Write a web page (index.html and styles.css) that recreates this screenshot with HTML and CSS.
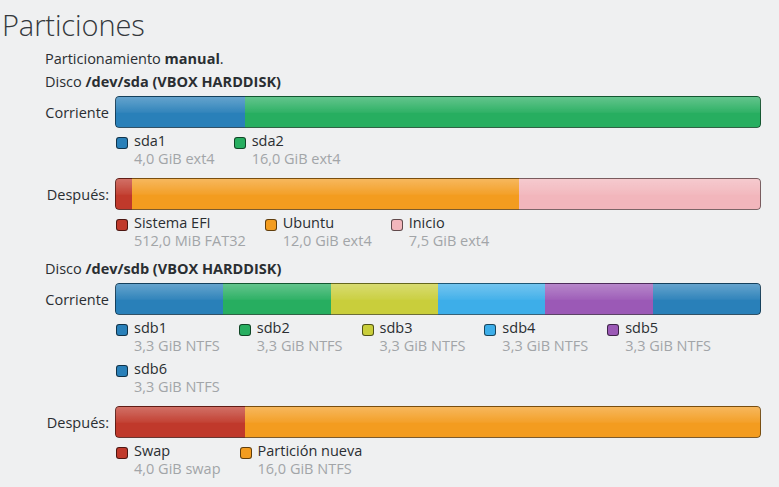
FILE: index.html
```html
<!DOCTYPE html>
<html lang="es">
<head>
<meta charset="utf-8">
<title>Particiones</title>
<link rel="stylesheet" href="styles.css">
</head>
<body>
<h1 class="title">Particiones</h1>
<div class="content">
  <p class="line">Particionamiento <b>manual</b>.</p>

  <p class="line">Disco <b>/dev/sda (VBOX HARDDISK)</b></p>
  <div class="row first">
    <span class="label">Corriente</span>
    <div class="bar">
      <span class="seg c-blue" style="flex: 4"></span>
      <span class="seg c-green" style="flex: 16"></span>
    </div>
  </div>
  <div class="legend">
    <div class="item"><span class="sw c-blue"></span><div><div class="name">sda1</div><div class="sub">4,0 GiB ext4</div></div></div>
    <div class="item"><span class="sw c-green"></span><div><div class="name">sda2</div><div class="sub">16,0 GiB ext4</div></div></div>
  </div>
  <div class="row">
    <span class="label">Después:</span>
    <div class="bar">
      <span class="seg c-red" style="flex: 0.5"></span>
      <span class="seg c-orange" style="flex: 12"></span>
      <span class="seg c-pink" style="flex: 7.5"></span>
    </div>
  </div>
  <div class="legend">
    <div class="item"><span class="sw c-red"></span><div><div class="name">Sistema EFI</div><div class="sub">512,0 MiB FAT32</div></div></div>
    <div class="item"><span class="sw c-orange"></span><div><div class="name">Ubuntu</div><div class="sub">12,0 GiB ext4</div></div></div>
    <div class="item"><span class="sw c-pink"></span><div><div class="name">Inicio</div><div class="sub">7,5 GiB ext4</div></div></div>
  </div>

  <p class="line disk2">Disco <b>/dev/sdb (VBOX HARDDISK)</b></p>
  <div class="row first">
    <span class="label">Corriente</span>
    <div class="bar">
      <span class="seg c-blue" style="flex: 1"></span>
      <span class="seg c-green" style="flex: 1"></span>
      <span class="seg c-yellow" style="flex: 1"></span>
      <span class="seg c-sky" style="flex: 1"></span>
      <span class="seg c-purple" style="flex: 1"></span>
      <span class="seg c-blue" style="flex: 1"></span>
    </div>
  </div>
  <div class="legend">
    <div class="item"><span class="sw c-blue"></span><div><div class="name">sdb1</div><div class="sub">3,3 GiB NTFS</div></div></div>
    <div class="item"><span class="sw c-green"></span><div><div class="name">sdb2</div><div class="sub">3,3 GiB NTFS</div></div></div>
    <div class="item"><span class="sw c-yellow"></span><div><div class="name">sdb3</div><div class="sub">3,3 GiB NTFS</div></div></div>
    <div class="item"><span class="sw c-sky"></span><div><div class="name">sdb4</div><div class="sub">3,3 GiB NTFS</div></div></div>
    <div class="item"><span class="sw c-purple"></span><div><div class="name">sdb5</div><div class="sub">3,3 GiB NTFS</div></div></div>
    <div class="item"><span class="sw c-blue"></span><div><div class="name">sdb6</div><div class="sub">3,3 GiB NTFS</div></div></div>
  </div>
  <div class="row">
    <span class="label">Después:</span>
    <div class="bar">
      <span class="seg c-red" style="flex: 4"></span>
      <span class="seg c-orange" style="flex: 16"></span>
    </div>
  </div>
  <div class="legend">
    <div class="item"><span class="sw c-red"></span><div><div class="name">Swap</div><div class="sub">4,0 GiB swap</div></div></div>
    <div class="item"><span class="sw c-orange"></span><div><div class="name">Partición nueva</div><div class="sub">16,0 GiB NTFS</div></div></div>
  </div>
</div>
</body>
</html>
```

FILE: styles.css
```css
html, body {
  margin: 0;
  padding: 0;
  background: #eff0f1;
}
body {
  font-family: "Open Sans", "DejaVu Sans", sans-serif;
  color: #2a2e32;
  font-size: 14.5px;
  width: 779px;
  height: 487px;
  overflow: hidden;
}
.title {
  margin: 0;
  height: 47px;
  padding-left: 2px;
  font-size: 29px;
  font-weight: 300;
  line-height: 50px;
  color: #34383c;
  letter-spacing: -0.1px;
}
.content {
  padding-left: 45px;
  width: 716px;
}
.line {
  margin: 0;
  height: 23px;
  line-height: 23px;
}
.line b { font-weight: 700; }
.disk2 { margin-top: 8px; }
.row {
  display: grid;
  grid-template-columns: 64px 1fr;
  column-gap: 6px;
  align-items: center;
  margin-top: 11px;
}
.row.first { margin-top: 3px; }
.label {
  text-align: right;
  white-space: nowrap;
}
.bar {
  display: flex;
  height: 32px;
  border-radius: 4px;
  overflow: hidden;
}
.seg {
  display: block;
  border-top: 1px solid rgba(0, 0, 0, 0.5);
  border-bottom: 1px solid rgba(0, 0, 0, 0.5);
  background-image: linear-gradient(to bottom, rgba(255,255,255,0.28), rgba(255,255,255,0.05) 50%, rgba(255,255,255,0) 55%);
}
.seg:first-child { border-left: 1px solid rgba(0, 0, 0, 0.5); border-radius: 4px 0 0 4px; }
.seg:last-child { border-right: 1px solid rgba(0, 0, 0, 0.5); border-radius: 0 4px 4px 0; }
.legend {
  display: flex;
  flex-wrap: wrap;
  row-gap: 6px;
  margin-left: 70px;
  margin-top: 4px;
}
.item {
  display: flex;
  align-items: flex-start;
  margin-right: 18px;
}
.sw {
  width: 10px;
  height: 10px;
  margin: 5px 6px 0 1px;
  border: 1px solid rgba(0, 0, 0, 0.6);
  border-radius: 3px;
  flex: none;
}
.name {
  line-height: 18px;
}
.sub {
  line-height: 17px;
  color: #a2a5a8;
}
.c-blue { background-color: #2980b9; }
.c-green { background-color: #27ae60; }
.c-yellow { background-color: #c9ce3b; }
.c-sky { background-color: #3daee9; }
.c-purple { background-color: #9b59b6; }
.c-red { background-color: #c0392b; }
.c-orange { background-color: #f39c1f; }
.c-pink { background-color: #f2b6bc; }
```
